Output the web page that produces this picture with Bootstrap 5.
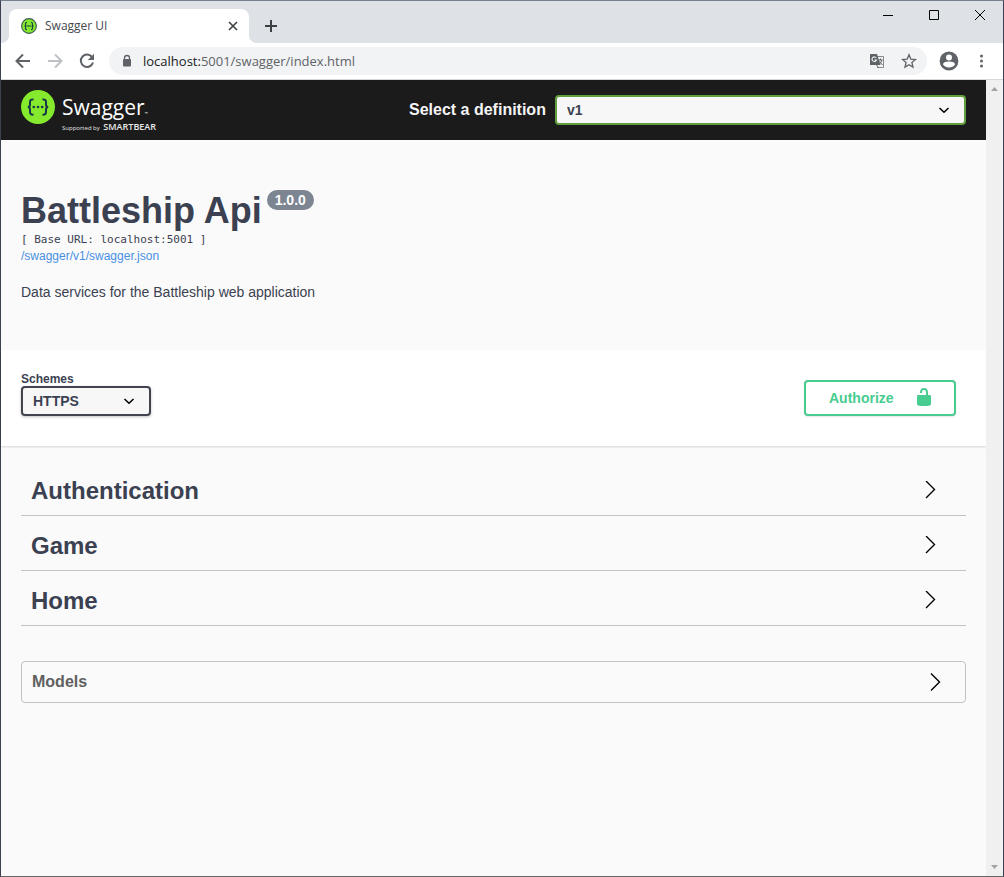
<!DOCTYPE html>
<html lang="en">
<head>
<meta charset="utf-8">
<meta name="viewport" content="width=device-width, initial-scale=1">
<title>Swagger UI</title>
<link href="https://cdn.jsdelivr.net/npm/bootstrap@5.3.0/dist/css/bootstrap.min.css" rel="stylesheet">
<style>
  :root { --ink: #3b4151; --chrome: #dee1e6; --icon: #5f6368; --ui: "Open Sans", "Noto Sans", sans-serif; }
  body { font-family: "Liberation Sans", Arial, sans-serif; font-size: 14px; line-height: 20px; color: var(--ink); }
  svg { display: block; flex: none; }
  .window { border: 1px solid var(--ink); border-top-color: #76808c; border-bottom-color: #666; background: #fafafa; }
  .plain { border: 0; background: none; padding: 0; color: var(--icon); display: flex; }

  /* Browser frame */
  .tabstrip { background: var(--chrome); height: 42px; font-family: var(--ui); }
  .browser-tab { width: 240px; height: 34px; padding: 0 10px 0 12px; background: #fff; border-radius: 8px 8px 0 0; font-size: 12px; color: #45494e; position: relative; }
  .browser-tab::before, .browser-tab::after { content: ""; position: absolute; bottom: 0; width: 8px; height: 8px; }
  .browser-tab::before { right: 100%; background: radial-gradient(circle at 0 0, transparent 8px, #fff 8px); }
  .browser-tab::after { left: 100%; background: radial-gradient(circle at 100% 0, transparent 8px, #fff 8px); }
  .window-buttons { gap: 30px; padding: 6px 15px 0 0; }
  .toolbar { height: 37px; background: #fff; border-bottom: 1px solid #d5d7da; padding: 0 12px 0 14px; font-family: var(--ui); }
  .address { height: 28px; border-radius: 14px; background: #f1f3f4; padding: 0 10px 0 12px; margin: 0 12px 0 14px; font-size: 13px; color: var(--icon); }
  .address b { font-weight: 400; color: #202124; }
  .address-lock { margin-right: 10px; }
  .scrollbar { width: 17px; background: #f0f0f0; padding: 6px 0; color: #a3a3a3; }

  /* Top bar */
  .topbar { background: #1b1b1b; height: 60px; padding: 0 20px; }
  .logo { color: #fff; font-family: var(--ui); gap: 7px; padding-top: 10px; }
  .logo-name { font-size: 21px; line-height: 22px; padding-top: 6px; }
  .logo-tm { font-size: 4px; line-height: 0; }
  .logo-tag { font-size: 6px; line-height: 20px; color: #e8e8e8; }
  .logo-tag strong { font-size: 9px; line-height: 0; font-weight: 600; margin-left: 2px; }
  .definition { width: 557px; font-size: 16px; font-weight: 700; color: #f5f5f5; gap: 9px; }
  .form-select.swag { height: 30px; padding: 0 40px 0 10px; border: 2px solid #41444e; border-radius: 4px; font-size: 14px; line-height: 20px; font-weight: 700; color: var(--ink);
    background-color: #f7f7f7; background-size: 20px 20px; background-position: right 10px center;
    background-image: url("data:image/svg+xml,%3Csvg xmlns='http://www.w3.org/2000/svg' viewBox='0 0 20 20'%3E%3Cpath fill='none' stroke='%23000' stroke-width='1.500' d='M5.500 8L10 12.300 14.500 8'/%3E%3C/svg%3E"); }
  .form-select.definition-select { border-color: #62a03f; }

  /* API information */
  .api-info { padding: 50px 20px; height: 210px; }
  .api-title { font-size: 36px; line-height: 42px; font-weight: 700; }
  .version { background: #7d8492; border-radius: 20px; padding: 3px 8px; font-size: 14px; line-height: 14px; font-weight: 700; color: #fff; margin-left: 5px; }
  .base-url { font-family: "DejaVu Sans Mono", monospace; font-size: 11px; line-height: 16px; }
  .spec-link { font-size: 12px; line-height: 16px; color: #4990e2; text-decoration: none; }
  .api-description { margin: 18px 0 0; }

  .scheme-bar { background: #fff; height: 96px; padding: 22px 30px 30px 20px; box-shadow: 0 1px 2px rgba(0,0,0,.15); }
  .scheme-label { font-size: 12px; line-height: 14px; font-weight: 700; }
  .form-select.scheme-select { width: 130px; box-shadow: 0 1px 3px rgba(0,0,0,.25); }
  .authorize { width: 152px; height: 36px; border: 2px solid #49cc90; border-radius: 4px; background: #fff; color: #49cc90; font-size: 14px; font-weight: 700; padding: 0 20px 2px 23px; box-shadow: 0 1px 2px rgba(0,0,0,.1); }
  .authorize span { padding-top: 2px; }

  .tags { padding: 15px 20px 0; }
  .tag-row { width: 100%; height: 55px; border: 0; border-bottom: 1px solid rgba(59,65,81,.3); background: none; padding: 5px 26px 0 10px; font-size: 24px; line-height: 28px; font-weight: 700; color: var(--ink); }
  .models { width: 100%; height: 42px; margin-top: 35px; border: 1px solid rgba(59,65,81,.3); border-radius: 4px; background: none; padding: 0 20px 0 10px; font-size: 16px; font-weight: 700; color: #606060; }
</style>
</head>
<body>
<div class="window d-flex flex-column min-vh-100">
  <div class="tabstrip d-flex align-items-end justify-content-between">
    <div class="d-flex align-items-center">
      <div class="browser-tab d-flex align-items-center gap-2 ms-2">
        <svg width="16" height="16" viewBox="0 0 16 16"><circle cx="8" cy="8" r="7.400" fill="#85ea2d" stroke="#3c5b53" stroke-width="1.100"/><path d="M6 4.200Q4.600 4.200 4.600 5.600V7Q4.600 8 3.500 8Q4.600 8 4.600 9V10.400Q4.600 11.800 6 11.800M10 4.200Q11.400 4.200 11.400 5.600V7Q11.400 8 12.500 8Q11.400 8 11.400 9V10.400Q11.400 11.800 10 11.800M5.500 8h5" fill="none" stroke="#173647" stroke-width="1.100"/></svg>
        <span class="flex-grow-1">Swagger UI</span>
        <button class="plain" aria-label="Close tab"><svg width="12" height="12" viewBox="0 0 12 12" stroke="#3c4043" stroke-width="1.600"><path d="M2 2l8 8M10 2l-8 8"/></svg></button>
      </div>
      <button class="plain ms-3" aria-label="New tab"><svg width="12" height="12" viewBox="0 0 12 12" stroke="#3c4043" stroke-width="2"><path d="M6 0v12M0 6h12"/></svg></button>
    </div>
    <div class="window-buttons d-flex align-self-start">
      <button class="plain" aria-label="Minimize"><svg width="16" height="16" stroke="#000"><path d="M3 8.500h10"/></svg></button>
      <button class="plain" aria-label="Maximize"><svg width="16" height="16" stroke="#000" fill="none"><path d="M3.500 3.500h9v9h-9z"/></svg></button>
      <button class="plain" aria-label="Close"><svg width="16" height="16" stroke="#000"><path d="M3 3l10 10M13 3L3 13"/></svg></button>
    </div>
  </div>
  <div class="toolbar d-flex align-items-center">
    <button class="plain" aria-label="Back"><svg width="16" height="16" viewBox="0 0 16 16" fill="none" stroke="#5f6368" stroke-width="2"><path d="M15 8H2M8 1.500L1.500 8L8 14.500"/></svg></button>
    <button class="plain ms-3" aria-label="Forward"><svg width="16" height="16" viewBox="0 0 16 16" fill="none" stroke="#bdc1c6" stroke-width="2"><path d="M1 8h13M8 1.500L14.500 8L8 14.500"/></svg></button>
    <button class="plain ms-3" aria-label="Reload"><svg width="16" height="16" viewBox="0 0 16 16"><path d="M13.200 4.200A6.200 6.200 0 1 0 14 9.500" fill="none" stroke="#5f6368" stroke-width="2"/><path d="M15 .8V7H8.800z" fill="#5f6368"/></svg></button>
    <div class="address d-flex align-items-center flex-grow-1">
      <svg class="address-lock" width="12" height="14" viewBox="0 0 12 14"><path d="M3.500 6V4a2.500 2.500 0 0 1 5 0v2" fill="none" stroke="#5f6368" stroke-width="1.300"/><rect x="2" y="5" width="8" height="7.500" rx="1" fill="#5f6368"/></svg>
      <span class="flex-grow-1"><b>localhost:</b>5001/swagger/index.html</span>
      <button class="plain me-3" aria-label="Translate this page"><svg width="16" height="16" viewBox="0 0 16 16"><path d="M6 3.500h8.500v11H8" fill="none" stroke="#85898d"/><path d="M1.500 1H8l3.500 11h-10Q1 12 1 11.500v-10Q1 1 1.500 1z" fill="#5f6368"/><path d="M7.300 5A2.300 2.300 0 1 0 7.500 7H5.500" fill="none" stroke="#f1f3f4" stroke-width="1.100"/><path d="M9.500 7h4M11.500 5.500V7M13 7q-.8 3-3 4.200M10.500 8.500l3 3.500M7.500 12l2 2.500" fill="none" stroke="#5f6368"/></svg></button>
      <button class="plain" aria-label="Bookmark"><svg width="16" height="16" viewBox="0 0 16 16"><path d="M8 1.800l1.800 4.300 4.700.4-3.600 3 1.100 4.600L8 11.700l-4 2.400 1.100-4.600-3.600-3 4.700-.4z" fill="none" stroke="#5f6368" stroke-width="1.300"/></svg></button>
    </div>
    <button class="plain" aria-label="Profile"><svg width="20" height="20" viewBox="0 0 20 20"><circle cx="10" cy="10" r="9.400" fill="#5f6368"/><circle cx="10" cy="6.500" r="3" fill="#fff"/><path d="M4 13.500q0-3 6-3t6 3q-2 3-6 3t-6-3" fill="#fff"/></svg></button>
    <button class="plain ms-3" aria-label="Browser menu"><svg width="16" height="16" viewBox="0 0 16 16" fill="#5f6368"><circle cx="6.500" cy="3" r="1.500"/><circle cx="6.500" cy="8" r="1.500"/><circle cx="6.500" cy="13" r="1.500"/></svg></button>
  </div>

  <div class="d-flex flex-grow-1">
    <main class="flex-grow-1">
      <header class="topbar d-flex align-items-center justify-content-between">
        <a href="#" class="logo d-flex align-self-start text-decoration-none">
          <svg width="34" height="34" viewBox="0 0 34 34"><circle cx="17" cy="17" r="17" fill="#85ea2d"/><path d="M12.500 9.500Q9 9 9 12v2.500Q9 17 6.800 17Q9 17 9 19.500V22q0 3 3.500 2.600M21.500 9.500Q25 9 25 12v2.500Q25 17 27.200 17Q25 17 25 19.500V22q0 3-3.500 2.600" fill="none" stroke="#173647" stroke-width="2"/><g fill="#173647"><circle cx="12.800" cy="17" r="1.300"/><circle cx="17" cy="17" r="1.300"/><circle cx="21.200" cy="17" r="1.300"/></g></svg>
          <span class="d-flex flex-column"><span class="logo-name">Swagger<span class="logo-tm">™</span></span><span class="logo-tag">Supported by <strong>SMARTBEAR</strong></span></span>
        </a>
        <div class="definition d-flex align-items-center">
          <label for="definition" class="text-nowrap">Select a definition</label>
          <select id="definition" class="form-select swag definition-select"><option>v1</option></select>
        </div>
      </header>

      <section class="api-info">
        <div class="d-flex align-items-start">
          <h1 class="api-title mb-0">Battleship Api</h1><span class="version">1.0.0</span>
        </div>
        <div class="base-url">[ Base URL: localhost:5001 ]</div>
        <a class="spec-link d-block" href="#">/swagger/v1/swagger.json</a>
        <p class="api-description">Data services for the Battleship web application</p>
      </section>

      <section class="scheme-bar d-flex align-items-start justify-content-between">
        <div>
          <label for="scheme" class="scheme-label d-block">Schemes</label>
          <select id="scheme" class="form-select swag scheme-select"><option>HTTPS</option></select>
        </div>
        <button class="authorize d-flex align-items-center justify-content-between mt-2"><span>Authorize</span>
          <svg width="20" height="20" viewBox="0 0 20 20" fill="#49cc90"><path d="M15.800 8H14V5.600C14 2.703 12.665 1 10 1 7.334 1 6 2.703 6 5.600V6h2v-.801C8 3.754 8.797 3 10 3c1.203 0 2 .754 2 2.199V8H4c-.553 0-1 .646-1 1.199V17c0 .549.428 1.139.951 1.307l1.197.387C5.672 18.861 6.550 19 7.100 19h5.800c.549 0 1.428-.139 1.951-.307l1.196-.387c.524-.167.953-.757.953-1.306V9.199C17 8.646 16.352 8 15.800 8z"/></svg></button>
      </section>

      <section class="tags">
        <button class="tag-row d-flex align-items-center justify-content-between"><span>Authentication</span><svg width="20" height="20" viewBox="0 0 20 20" fill="none" stroke="#000" stroke-width="1.400"><path d="M6 0l8.500 8.500L6 17"/></svg></button>
        <button class="tag-row d-flex align-items-center justify-content-between"><span>Game</span><svg width="20" height="20" viewBox="0 0 20 20" fill="none" stroke="#000" stroke-width="1.400"><path d="M6 0l8.500 8.500L6 17"/></svg></button>
        <button class="tag-row d-flex align-items-center justify-content-between"><span>Home</span><svg width="20" height="20" viewBox="0 0 20 20" fill="none" stroke="#000" stroke-width="1.400"><path d="M6 0l8.500 8.500L6 17"/></svg></button>
        <button class="models d-flex align-items-center justify-content-between"><span>Models</span><svg width="20" height="20" viewBox="0 0 20 20" fill="none" stroke="#000" stroke-width="1.400"><path d="M6 1.500l8.500 8.500L6 18.500"/></svg></button>
      </section>
    </main>
    <div class="scrollbar d-flex flex-column justify-content-between align-items-center" aria-hidden="true">
      <svg width="7" height="6" fill="currentColor"><path d="M0 5L3.500 1L7 5z"/></svg>
      <svg width="7" height="6" fill="currentColor"><path d="M0 1h7L3.500 5z"/></svg>
    </div>
  </div>
</div>
<script src="https://cdn.jsdelivr.net/npm/bootstrap@5.3.0/dist/js/bootstrap.bundle.min.js"></script>
</body>
</html>
